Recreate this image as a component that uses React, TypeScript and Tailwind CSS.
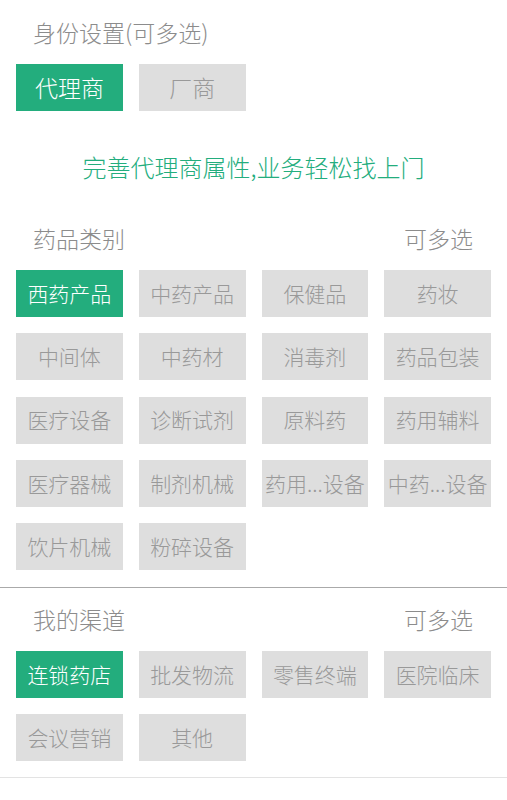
import { useState } from "react";

const drugTypes = [
  "西药产品", "中药产品", "保健品", "药妆",
  "中间体", "中药材", "消毒剂", "药品包装",
  "医疗设备", "诊断试剂", "原料药", "药用辅料",
  "医疗器械", "制剂机械", "药用...设备", "中药...设备",
  "饮片机械", "粉碎设备",
];

const channels = ["连锁药店", "批发物流", "零售终端", "医院临床", "会议营销", "其他"];

function Chip({
  label,
  active,
  large,
  onClick,
}: {
  label: string;
  active: boolean;
  large?: boolean;
  onClick: () => void;
}) {
  return (
    <button
      onClick={onClick}
      className={`h-[47px] w-full flex items-center justify-center whitespace-nowrap overflow-hidden font-light ${
        large ? "text-[23px]" : "text-[21px]"
      } ${active ? "bg-[#23ad7d] text-white" : "bg-[#dedede] text-[#999999]"}`}
    >
      {label}
    </button>
  );
}

function Section({ title, items, initial }: { title: string; items: string[]; initial: string[] }) {
  const [selected, setSelected] = useState<string[]>(initial);
  const toggle = (v: string) =>
    setSelected((s) => (s.includes(v) ? s.filter((x) => x !== v) : [...s, v]));

  return (
    <div>
      <div className="flex justify-between items-center h-[30px] pl-[33px] pr-[34px] text-[23px] font-light text-[#8c8c8c]">
        <span>{title}</span>
        <span>可多选</span>
      </div>
      <div className="mt-[17px] px-[16px] grid grid-cols-4 gap-x-[16px] gap-y-[16.25px]">
        {items.map((it) => (
          <Chip key={it} label={it} active={selected.includes(it)} onClick={() => toggle(it)} />
        ))}
      </div>
    </div>
  );
}

export default function App() {
  const [role, setRole] = useState("代理商");

  return (
    <div
      className="min-h-screen bg-white pt-[17px]"
      style={{ fontFamily: '"Noto Sans CJK SC", "Noto Sans", sans-serif' }}
    >
      {/* 身份设置 */}
      <div className="h-[30px] flex items-center px-[33px] text-[23px] font-light text-[#8c8c8c]">
        身份设置(可多选)
      </div>
      <div className="mt-[17px] px-[16px] grid grid-cols-4 gap-x-[16px]">
        {["代理商", "厂商"].map((r) => (
          <Chip key={r} label={r} large active={role === r} onClick={() => setRole(r)} />
        ))}
      </div>

      <div className="mt-[41px] h-[30px] flex items-center justify-center text-[24px] font-light text-[#23ad7d]">
        完善代理商属性,业务轻松找上门
      </div>

      <div className="mt-[41px]">
        <Section title="药品类别" items={drugTypes} initial={["西药产品"]} />
      </div>

      <div className="mt-[17px] h-px bg-[#aaaaaa]" />

      <div className="mt-[16px]">
        <Section title="我的渠道" items={channels} initial={["连锁药店"]} />
      </div>

      <div className="mt-[16px] h-px bg-[#e3e3e3]" />
    </div>
  );
}
